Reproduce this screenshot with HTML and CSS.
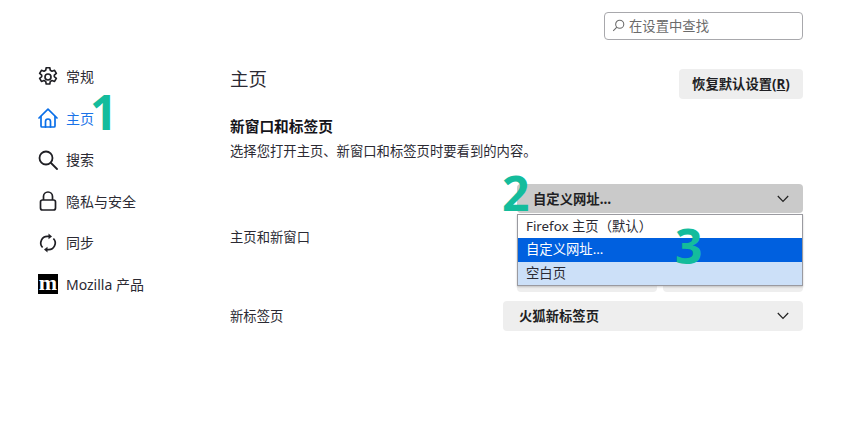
FILE: index.html
```html
<!DOCTYPE html>
<html lang="zh-CN">
  <head>
    <meta charset="UTF-8" name="viewport" content="width=device-width, initial-scale=1">
    <title>设置 - 主页</title>
    <link rel="stylesheet" href="styles.css">
  </head>
  <body>
    <div class="topbar">
      <div class="search">
        <svg class="search_icon" viewBox="0 0 16 16" width="13" height="13" fill="none" stroke="#6b6b6b" stroke-width="1.3"><circle cx="9.5" cy="6.5" r="5"/><path d="M6 10 1.5 14.5"/></svg>
        <span>在设置中查找</span>
      </div>
    </div>
    <div class="page">
      <nav class="nav">
        <a class="nav_item">
          <svg viewBox="1 1 18 18" width="20" height="20" fill="none" stroke="#1f1f24" stroke-width="1.5" stroke-linejoin="round"><path d="M8.4 1.7h3.2l.5 2.3 1.5.8 2.3-.8 1.6 2.8-1.8 1.5v1.4l1.8 1.5-1.6 2.8-2.3-.8-1.5.8-.5 2.3H8.4l-.5-2.3-1.5-.8-2.3.8-1.6-2.8 1.8-1.5V8.3L2.5 6.8l1.6-2.8 2.3.8 1.5-.8z"/><circle cx="10" cy="10" r="2.7"/></svg>
          <span>常规</span>
        </a>
        <a class="nav_item nav_active">
          <svg viewBox="0 0 20 20" width="20" height="20" fill="none" stroke="#0a6fe8" stroke-width="1.7" stroke-linejoin="round" stroke-linecap="round"><path d="M1 10 10 1.2 19 10"/><path d="M3 8.5V18a1 1 0 0 0 1 1h12a1 1 0 0 0 1-1V8.5"/><path d="M7.5 19v-5.5a2.5 2.5 0 0 1 5 0V19"/></svg>
          <span>主页</span>
        </a>
        <a class="nav_item">
          <svg viewBox="0 0 20 20" width="20" height="20" fill="none" stroke="#1f1f24" stroke-width="1.8" stroke-linecap="round"><circle cx="8" cy="8" r="6.5"/><path d="m13 13 6 6"/></svg>
          <span>搜索</span>
        </a>
        <a class="nav_item">
          <svg viewBox="0 0 20 20" width="20" height="20" fill="none" stroke="#1f1f24" stroke-width="1.7"><rect x="2.5" y="9" width="15" height="10" rx="2"/><path d="M5.5 9V5.5a4.5 4.5 0 0 1 9 0V9"/></svg>
          <span>隐私与安全</span>
        </a>
        <a class="nav_item">
          <svg viewBox="0 0 20 20" width="20" height="20" fill="none" stroke="#1f1f24" stroke-width="1.7"><path d="M4.6 14.5A6.6 6.6 0 0 1 10 3.4h1"/><path d="M15.4 5.5A6.6 6.6 0 0 1 10 16.6H9"/><path d="M10.5 .5l3.5 2.9-3.5 2.9z" fill="#1f1f24" stroke="none"/><path d="M9.5 13.7 6 16.6l3.5 2.9z" fill="#1f1f24" stroke="none"/></svg>
          <span>同步</span>
        </a>
        <a class="nav_item">
          <span class="moz_logo">m</span>
          <span>Mozilla 产品</span>
        </a>
      </nav>
      <main class="main">
        <div class="head_row">
          <h1>主页</h1>
          <button type="button" class="btn_reset">恢复默认设置(<u>R</u>)</button>
        </div>
        <h2>新窗口和标签页</h2>
        <p class="desc">选择您打开主页、新窗口和标签页时要看到的内容。</p>
        <div class="row_home">
          <label>主页和新窗口</label>
          <div class="home_controls">
            <div class="select select_open">
              <span>自定义网址…</span>
              <svg class="chevron" viewBox="0 0 12 8" width="12" height="8" fill="none" stroke="#222" stroke-width="1.2"><path d="M.8 1 6 6.5 11.2 1"/></svg>
            </div>
            <div class="home_btns">
              <button type="button" class="btn_plain"></button>
              <button type="button" class="btn_plain"></button>
            </div>
            <ul class="dropdown">
              <li>Firefox 主页（默认）</li>
              <li class="opt_selected">自定义网址…</li>
              <li class="opt_hover">空白页</li>
            </ul>
          </div>
        </div>
        <div class="row_tab">
          <label class="tab_label">新标签页</label>
          <div class="select select_tab">
            <span class="tab_value">火狐新标签页</span>
            <svg class="chevron" viewBox="0 0 12 8" width="12" height="8" fill="none" stroke="#222" stroke-width="1.2"><path d="M.8 1 6 6.5 11.2 1"/></svg>
          </div>
        </div>
      </main>
    </div>
    <span class="mark mark1">1</span>
    <span class="mark mark2">2</span>
    <span class="mark mark3">3</span>
  </body>
</html>
```

FILE: styles.css
```css
body {
  margin: 0;
  background-color: #ffffff;
  color: #2b2a33;
  font-family: "Noto Sans", "Noto Sans CJK SC", sans-serif;
  font-size: 13.33px;
}

.topbar {
  display: flex;
  justify-content: flex-end;
  padding: 12px 62px 0 0;
}

.search {
  display: flex;
  align-items: center;
  gap: 4px;
  box-sizing: border-box;
  width: 199px;
  height: 28px;
  padding: 0 0 2px 7px;
  border: 1px solid #a8a8ac;
  border-radius: 4px;
  color: #6b6b6b;
}

.page {
  display: grid;
  grid-template-columns: 192px 573px;
  padding: 16px 0 0 38px;
}

.nav {
  display: flex;
  flex-direction: column;
}

.nav_item {
  display: flex;
  align-items: center;
  gap: 8px;
  height: 41.5px;
  font-size: 14px;
}

.nav_item span {
  margin-bottom: 1px;
}

.nav_active {
  color: #1a73e8;
}

.nav_item .moz_logo {
  display: block;
  width: 20px;
  height: 20px;
  margin: 0;
  background-color: #000000;
  color: #ffffff;
  font-family: "Liberation Serif", serif;
  font-size: 22px;
  font-weight: bold;
  line-height: 17px;
  text-align: center;
}

.main {
  padding-top: 13px;
}

.head_row {
  display: flex;
  justify-content: space-between;
  align-items: flex-start;
  height: 30px;
}

h1 {
  margin: 0;
  font-size: 18.5px;
  font-weight: normal;
  line-height: 20px;
}

.btn_reset {
  width: 124px;
  height: 30px;
  padding: 0 0 2px 0;
  border: none;
  border-radius: 4px;
  background-color: #eeeeee;
  color: #1f1f24;
  font-family: inherit;
  font-size: 13.33px;
  font-weight: bold;
}

h2 {
  margin: 16px 0 0 0;
  font-size: 14.7px;
  font-weight: bold;
  line-height: 22px;
  color: #15141a;
}

.desc {
  margin: 3px 0 0 0;
  line-height: 22px;
}

.row_home {
  display: flex;
  justify-content: space-between;
  margin-top: 22px;
}

.row_home label {
  margin-top: 43px;
  line-height: 20px;
}

.home_controls {
  position: relative;
  width: 286px;
}

.select {
  display: flex;
  justify-content: space-between;
  align-items: center;
  box-sizing: border-box;
  height: 29px;
  padding: 0 14px 0 16px;
  border-radius: 4px;
  font-weight: bold;
  color: #1f1f24;
}

.select_open {
  background-color: #cacaca;
}

.select_tab {
  width: 300px;
  height: 30px;
  background-color: #eeeeee;
}

.tab_value,
.tab_label {
  margin-bottom: 2px;
}

.home_btns {
  display: flex;
  gap: 6px;
  margin-top: 49px;
}

.btn_plain {
  flex: 1;
  height: 30px;
  border: none;
  border-radius: 4px;
  background-color: #eeeeee;
}

.dropdown {
  position: absolute;
  top: 30px;
  left: 0;
  right: 0;
  margin: 0;
  padding: 0;
  list-style: none;
  background-color: #ffffff;
  border: 1px solid #9a9aa0;
  box-shadow: 0 1px 2px rgba(0, 0, 0, 0.2);
}

.dropdown li {
  height: 23.3px;
  padding-left: 8px;
  line-height: 23px;
}

.opt_selected {
  background-color: #0060df;
  color: #ffffff;
}

.opt_hover {
  background-color: #cce0f8;
}

.row_tab {
  display: flex;
  justify-content: space-between;
  align-items: center;
  margin-top: 9px;
}

.mark {
  position: absolute;
  color: #14bc9c;
  font-family: "Open Sans", sans-serif;
  font-size: 48px;
  font-weight: 700;
  line-height: 48px;
}

.mark1 {
  left: 90px;
  top: 88px;
}

.mark2 {
  left: 502px;
  top: 169px;
}

.mark3 {
  left: 675px;
  top: 222px;
}
```
